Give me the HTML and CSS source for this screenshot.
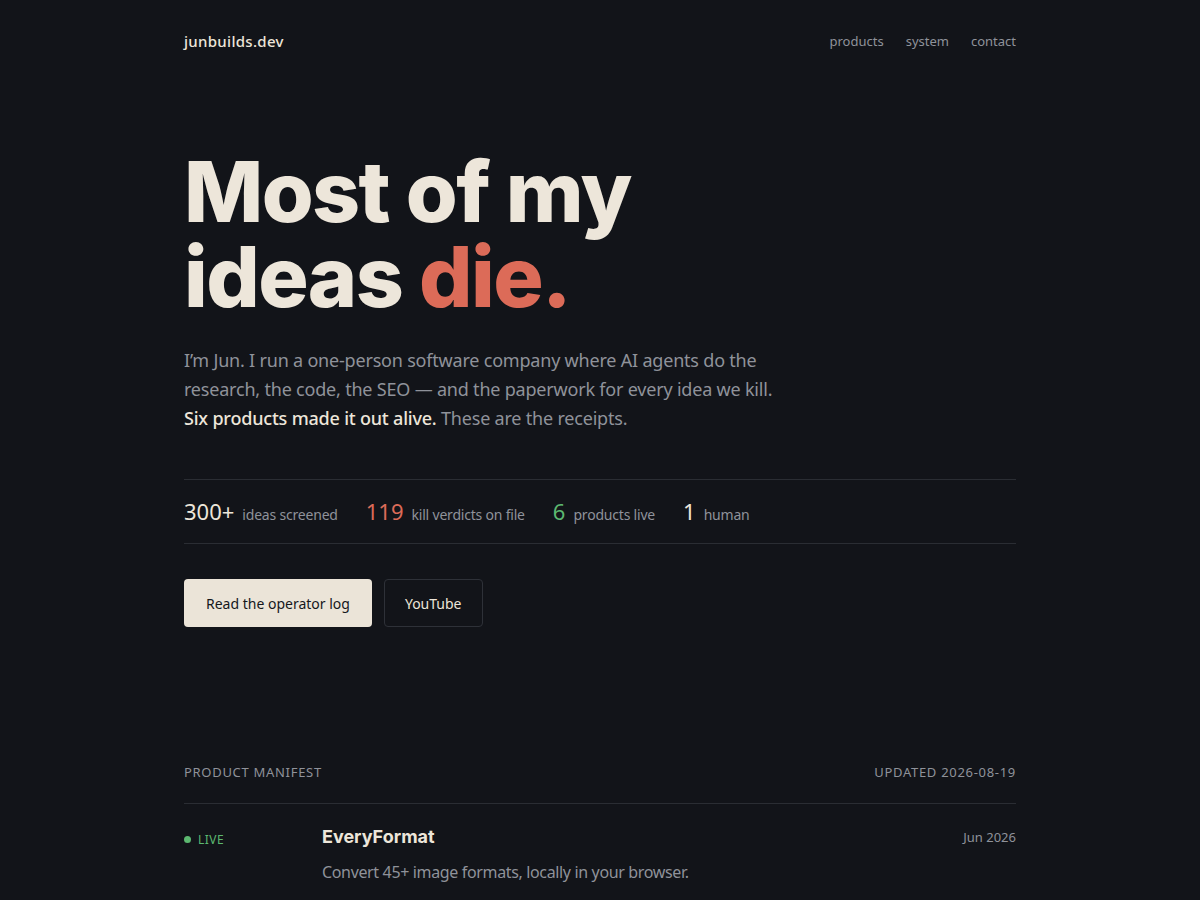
FILE: index.html
```html
<!DOCTYPE html>
<html lang="en">
<head>
<meta charset="utf-8">
<title>junbuilds.dev</title>
<link rel="stylesheet" href="styles.css">
</head>
<body>
<div class="page">
  <header class="top">
    <a class="logo" href="#">junbuilds.dev</a>
    <nav class="nav">
      <a href="#">products</a>
      <a href="#">system</a>
      <a href="#">contact</a>
    </nav>
  </header>

  <section class="hero">
    <h1 class="title">Most of my<br>ideas <span class="accent">die.</span></h1>
    <p class="lede">I’m Jun. I run a one-person software company where AI agents do the research, the code, the SEO — and the paperwork for every idea we kill. <strong>Six products made it out alive.</strong> These are the receipts.</p>

    <div class="stats">
      <div class="stat"><span class="num">300+</span><span class="lbl">ideas screened</span></div>
      <div class="stat"><span class="num red">119</span><span class="lbl">kill verdicts on file</span></div>
      <div class="stat"><span class="num green">6</span><span class="lbl">products live</span></div>
      <div class="stat"><span class="num">1</span><span class="lbl">human</span></div>
    </div>

    <div class="actions">
      <a class="btn primary" href="#">Read the operator log</a>
      <a class="btn ghost" href="#">YouTube</a>
    </div>
  </section>

  <section class="manifest">
    <div class="mhead">
      <span>Product manifest</span>
      <span>Updated 2026-08-19</span>
    </div>
    <div class="row">
      <div class="status"><span class="dot"></span>LIVE</div>
      <div class="info">
        <div class="name">EveryFormat</div>
        <div class="desc">Convert 45+ image formats, locally in your browser.</div>
      </div>
      <div class="date">Jun 2026</div>
    </div>
  </section>
</div>
</body>
</html>
```
FILE: styles.css
```css
* { box-sizing: border-box; }
html, body { margin: 0; padding: 0; }
body {
  background: #121419;
  color: #ede6da;
  font-family: "Noto Sans", "Open Sans", sans-serif;
}
a { text-decoration: none; color: inherit; }
.page {
  width: 832px;
  margin: 0 auto;
}
.top {
  display: flex;
  justify-content: space-between;
  align-items: center;
  height: 82px;
}
.logo {
  font-size: 15px;
  font-weight: 500;
  color: #ede6da;
  letter-spacing: 0.3px;
}
.nav { display: flex; gap: 22px; }
.nav a { font-size: 13px; color: #8f929a; }

.hero { padding-top: 67px; }
.title {
  margin: 0;
  font-family: Inter, sans-serif;
  font-weight: 800;
  font-size: 84px;
  line-height: 85px;
  letter-spacing: -1.6px;
  color: #ede6da;
}
.accent { color: #dc6b58; }
.lede {
  margin: 27px 0 0;
  width: 610px;
  font-size: 18px;
  line-height: 29px;
  color: #8f929a;
  letter-spacing: -0.2px;
}
.lede strong { color: #ede6da; font-weight: 500; }

.stats {
  margin-top: 46px;
  display: flex;
  gap: 28px;
  align-items: baseline;
  height: 65px;
  padding-top: 16px;
  border-top: 1px solid #2a2d33;
  border-bottom: 1px solid #2a2d33;
}
.stat { display: flex; align-items: baseline; gap: 8px; }
.num { font-size: 22px; color: #ede6da; }
.num.red { color: #dc6b58; }
.num.green { color: #5cb870; }
.lbl { font-size: 14px; color: #8f929a; letter-spacing: -0.2px; }

.actions { margin-top: 35px; display: flex; gap: 12px; }
.btn {
  display: inline-flex;
  align-items: center;
  height: 48px;
  padding: 0 22px;
  border-radius: 4px;
  font-size: 14px;
}
.btn.primary { background: #ebe4d8; color: #15171c; }
.btn.ghost { border: 1px solid #2e3138; color: #ede6da; padding: 0 20px; }

.manifest { margin-top: 136px; }
.mhead {
  display: flex;
  justify-content: space-between;
  font-size: 13px;
  letter-spacing: 0.7px;
  text-transform: uppercase;
  color: #8f929a;
  padding-bottom: 22px;
  border-bottom: 1px solid #2a2d33;
}
.row {
  display: flex;
  align-items: flex-start;
  padding-top: 22px;
}
.status {
  width: 138px;
  display: flex;
  align-items: center;
  gap: 7px;
  font-size: 12px;
  color: #5cb870;
  letter-spacing: 0.5px;
  padding-top: 5px;
}
.dot { width: 7px; height: 7px; border-radius: 50%; background: #5cb870; }
.info { flex: 1; }
.name {
  font-family: Inter, sans-serif;
  font-weight: 700;
  font-size: 18px;
  letter-spacing: 0;
  color: #ede6da;
}
.desc { margin-top: 14px; font-size: 16px; color: #8f929a; letter-spacing: -0.35px; }
.date { font-size: 13px; color: #8f929a; padding-top: 2px; }
```
